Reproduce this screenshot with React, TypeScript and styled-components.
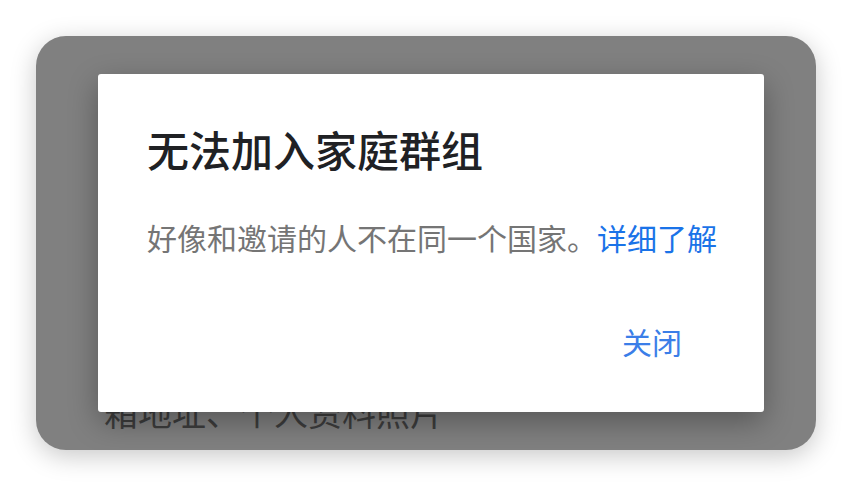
import React from "react";
import styled, { createGlobalStyle } from "styled-components";

const Global = createGlobalStyle`
  html, body {
    margin: 0;
    padding: 0;
    background: #ffffff;
  }
  body {
    font-family: "Noto Sans CJK SC", "Noto Sans", sans-serif;
  }
`;

const Page = styled.div`
  width: 852px;
  height: 486px;
  padding: 36px;
  box-sizing: border-box;
`;

const Screen = styled.div`
  position: relative;
  width: 780px;
  height: 414px;
  border-radius: 30px;
  background: #808080;
  box-shadow: 0 6px 26px rgba(0, 0, 0, 0.22);
  overflow: hidden;
  display: flex;
  flex-direction: column;
  justify-content: flex-end;
  padding: 0 0 18px 68px;
  box-sizing: border-box;
`;

const BackgroundLine = styled.div`
  font-size: 34px;
  line-height: 40px;
  color: #3d3d3d;
  white-space: nowrap;
`;

const Dialog = styled.div`
  position: absolute;
  left: 62px;
  top: 38px;
  width: 666px;
  height: 338px;
  box-sizing: border-box;
  background: #ffffff;
  border-radius: 3px;
  box-shadow: 0 10px 30px rgba(0, 0, 0, 0.32);
  padding: 47px 0 0 49px;
  display: flex;
  flex-direction: column;
`;

const Title = styled.h1`
  margin: 0;
  font-size: 42px;
  line-height: 56px;
  font-weight: 500;
  color: #202124;
`;

const Message = styled.p`
  margin: 40px 0 0;
  font-size: 30px;
  line-height: 40px;
  color: #757575;
  white-space: nowrap;
`;

const Link = styled.a`
  color: #1a73e8;
  text-decoration: none;
`;

const Actions = styled.div`
  margin-top: 64px;
  display: flex;
  justify-content: flex-end;
  padding-right: 66px;
`;

const TextButton = styled.button`
  border: none;
  background: transparent;
  padding: 0 16px;
  font-family: inherit;
  font-size: 30px;
  line-height: 40px;
  color: #3b7ee8;
  cursor: pointer;
`;

export default function App() {
  return (
    <>
      <Global />
      <Page>
        <Screen>
          <BackgroundLine>箱地址、个人资料照片</BackgroundLine>
          <Dialog role="dialog">
            <Title>无法加入家庭群组</Title>
            <Message>
              好像和邀请的人不在同一个国家。<Link href="#">详细了解</Link>
            </Message>
            <Actions>
              <TextButton>关闭</TextButton>
            </Actions>
          </Dialog>
        </Screen>
      </Page>
    </>
  );
}
